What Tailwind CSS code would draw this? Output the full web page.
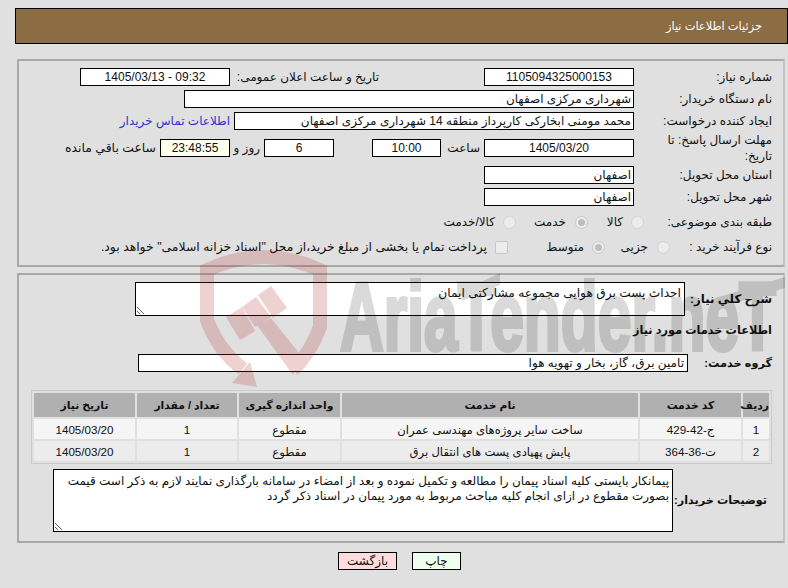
<!DOCTYPE html>
<html lang="fa" dir="rtl">
<head>
  <meta charset="UTF-8" />
  <title>جزئیات اطلاعات نیاز</title>
  <script src="https://cdn.jsdelivr.net/npm/@tailwindcss/browser@4"></script>
</head>
<body class="relative w-[788px] h-[588px] overflow-hidden bg-[#e0e0e0] text-[12px] leading-[17px] text-[#111] font-['Liberation_Sans','DejaVu_Sans',sans-serif]">

  <!-- Header -->
  <div class="absolute left-[15px] right-0 top-[8px] h-[36px] border border-black bg-[#8c6c42] text-white text-[11.4px] flex items-center pr-[25px]">جزئیات اطلاعات نیاز</div>

  <div class="pt-[59px] pr-[3px]">
    <!-- Details panel -->
    <section class="w-[768px] h-[208px] border-2 border-[#a8a8a8] border-r-[#c4c4c4] pr-[11px] pt-[7px]">
      <div class="flex h-[18px] mb-[4px] items-center">
        <div class="w-[138px]">شماره نیاز:</div>
        <div class="w-[150px] h-[18px] border border-black bg-white text-center">1105094325000153</div>
        <div class="w-[149px] mr-[105px] whitespace-nowrap">تاریخ و ساعت اعلان عمومی:</div>
        <div class="w-[150px] h-[18px] border border-black bg-white text-center" dir="ltr">1405/03/13 - 09:32</div>
      </div>
      <div class="flex h-[18px] mb-[4px] items-center">
        <div class="w-[138px]">نام دستگاه خریدار:</div>
        <div class="w-[450px] h-[18px] border border-black bg-white pr-[2px]">شهرداری مرکزی اصفهان</div>
      </div>
      <div class="flex h-[18px] mb-[4px] items-center">
        <div class="w-[138px]">ایجاد کننده درخواست:</div>
        <div class="w-[400px] h-[18px] border border-black bg-white pr-[2px]">محمد مومنی ابخارکی کارپرداز منطقه 14 شهرداری مرکزی اصفهان</div>
        <a href="#" class="mr-[4px] text-[#3333cc]">اطلاعات تماس خریدار</a>
      </div>
      <div class="flex h-[28px] mb-[4px] items-center">
        <div class="w-[138px] pl-[20px] leading-[16px]">مهلت ارسال پاسخ: تا تاریخ:</div>
        <div class="w-[150px] h-[18px] border border-black bg-white text-center">1405/03/20</div>
        <div class="w-[39px] mr-[4px]">ساعت</div>
        <div class="w-[69px] h-[18px] border border-black bg-white text-center">10:00</div>
        <div class="w-[70px] h-[18px] mr-[38px] border border-black bg-white text-center">6</div>
        <div class="w-[34px] pr-[4px]">روز و</div>
        <div class="w-[70px] h-[18px] border border-black bg-[#ffffee] text-center">23:48:55</div>
        <div class="mr-[4px] text-[12.4px]">ساعت باقي مانده</div>
      </div>
      <div class="flex h-[18px] mb-[4px] items-center">
        <div class="w-[138px]">استان محل تحویل:</div>
        <div class="w-[150px] h-[18px] border border-black bg-white pr-[2px]">اصفهان</div>
      </div>
      <div class="flex h-[18px] mb-[5px] items-center">
        <div class="w-[138px]">شهر محل تحویل:</div>
        <div class="w-[150px] h-[18px] border border-black bg-white pr-[2px]">اصفهان</div>
      </div>
      <div class="flex h-[22px] items-center">
        <div class="w-[128px]">طبقه بندی موضوعی:</div>
        <span class="w-[13px] h-[13px] rounded-full border border-[#d2d2d2] bg-[#ececec]"></span>
        <span class="w-[43px] pr-[8px]">کالا</span>
        <span class="w-[13px] h-[13px] rounded-full border border-[#c8c8c8] bg-[#ececec] flex items-center justify-center"><span class="w-[7px] h-[7px] rounded-full bg-[#bdbdbd]"></span></span>
        <span class="w-[59px] pr-[9px]">خدمت</span>
        <span class="w-[13px] h-[13px] rounded-full border border-[#d2d2d2] bg-[#ececec]"></span>
        <span class="pr-[8px]">کالا/خدمت</span>
      </div>
      <div class="flex h-[24px] mt-[2px] items-center">
        <div class="w-[102px]">نوع فرآیند خرید :</div>
        <span class="w-[13px] h-[13px] rounded-full border border-[#d2d2d2] bg-[#ececec]"></span>
        <span class="w-[52px] pr-[9px]">جزیی</span>
        <span class="w-[13px] h-[13px] rounded-full border border-[#c8c8c8] bg-[#ececec] flex items-center justify-center"><span class="w-[7px] h-[7px] rounded-full bg-[#bdbdbd]"></span></span>
        <span class="w-[84px] pr-[8px]">متوسط</span>
        <span class="w-[13px] h-[13px] rounded-[2px] border border-[#c8c8c8] bg-[#ececec]"></span>
        <span class="pr-[8px] whitespace-nowrap text-[12.4px]">پرداخت تمام یا بخشی از مبلغ خرید،از محل "اسناد خزانه اسلامی" خواهد بود.</span>
      </div>
    </section>

    <!-- Services panel -->
    <section class="mt-[6px] w-[768px] h-[270px] border-2 border-[#a8a8a8] border-r-[#c4c4c4] pr-[11px] pt-[7px]">
      <div class="flex items-center h-[34px]">
        <label class="w-[87px] font-bold text-[11.8px] whitespace-nowrap">شرح کلي نیاز:</label>
        <textarea readonly class="w-[550px] h-[34px] border border-black bg-white px-[3px] pt-[3px] pb-0 text-[12.2px] leading-[15px] outline-none">احداث پست برق هوایی مجموعه مشارکتی ایمان</textarea>
      </div>
      <div class="mt-[6px] h-[16px] font-bold text-[11.3px]">اطلاعات خدمات مورد نیاز</div>
      <div class="flex items-center h-[18px] mt-[16px]">
        <label class="w-[84px] font-bold text-[11.3px] whitespace-nowrap">گروه خدمت:</label>
        <div class="w-[550px] h-[18px] border border-black bg-white pr-[3px]">تامین برق، گاز، بخار و تهویه هوا</div>
      </div>
      <table class="mt-[18px] w-[741px] border border-[#cccccc] border-separate border-spacing-[2px] table-fixed text-center text-[11.6px]">
        <thead>
          <tr class="h-[24px] bg-[#b0b0b0] text-[10.8px]">
            <th class="w-[26px] font-bold p-0">ردیف</th>
            <th class="w-[101px] font-bold p-0">کد خدمت</th>
            <th class="w-[296px] font-bold p-0">نام خدمت</th>
            <th class="w-[101px] font-bold p-0">واحد اندازه گیری</th>
            <th class="w-[100px] font-bold p-0">تعداد / مقدار</th>
            <th class="font-bold p-0">تاریخ نیاز</th>
          </tr>
        </thead>
        <tbody>
          <tr class="h-[20px] bg-[#f5f5f5]">
            <td class="p-0">1</td>
            <td class="p-0">ج-42-429</td>
            <td class="p-0">ساخت سایر پروژه‌های مهندسی عمران</td>
            <td class="p-0">مقطوع</td>
            <td class="p-0">1</td>
            <td class="p-0">1405/03/20</td>
          </tr>
          <tr class="h-[20px] bg-[#ececec]">
            <td class="p-0">2</td>
            <td class="p-0">ت-36-364</td>
            <td class="p-0">پایش پهپادی پست های انتقال برق</td>
            <td class="p-0">مقطوع</td>
            <td class="p-0">1</td>
            <td class="p-0">1405/03/20</td>
          </tr>
        </tbody>
      </table>
      <div class="flex items-center mt-[5px] h-[63px] pr-[5px]">
        <label class="w-[94px] font-bold text-[11.2px] whitespace-nowrap">توضیحات خریدار:</label>
        <textarea readonly class="w-[620px] h-[63px] border border-black bg-white px-[3px] pt-[4px] pb-0 leading-[15px] outline-none">پیمانکار بایستی کلیه اسناد پیمان را مطالعه و تکمیل نموده و بعد از امضاء در سامانه بارگذاری نمایند لازم به ذکر است قیمت بصورت مقطوع در ازای انجام کلیه مباحث مربوط به مورد پیمان در اسناد ذکر گردد</textarea>
      </div>
    </section>

    <!-- Buttons -->
    <div class="flex justify-center gap-[15px] mt-[9px] pl-[14px]">
      <button class="w-[49px] h-[18px] border border-black bg-[#eeffee]">چاپ</button>
      <button class="w-[59px] h-[18px] border border-black bg-[#ffdddd]">بازگشت</button>
    </div>
  </div>

  <!-- AriaTender watermark, lies over the form -->
  <svg class="absolute inset-0 pointer-events-none" width="788" height="588" viewBox="0 0 788 588">
    <g opacity="0.2">
      <path d="M243 369 Q218 350 207 320 L207 270 Q263 244 320 270 L320 327 Q311 352 293 370" fill="none" stroke="#b02020" stroke-width="14" />
      <path d="M250 362 L257 387 L232 383 Z" fill="#b02020" />
      <path d="M226 317 L242 307 L255 331 L240 340 Z" fill="#b02020" />
      <path d="M242 307 L256 297 L271 317 L255 327 Z" fill="#b02020" />
      <path d="M258 295 L271 286 L287 308 L273 318 Z" fill="#b02020" />
      <path d="M257 325 L271 318 L303 358 L293 375 Z" fill="#b02020" />
    </g>
    <g opacity="0.14" fill="#000">
      <text x="340" y="350" direction="ltr" font-family="Liberation Sans" font-weight="700" font-size="96" textLength="436" lengthAdjust="spacingAndGlyphs" stroke="#000" stroke-width="4">AriaTender.neT</text>
      <path d="M462 291 L500 273 L500 285 L462 301 Z" />
      <path d="M722 296 L785 277 L785 288 L722 307 Z" />
    </g>
  </svg>
</body>
</html>
